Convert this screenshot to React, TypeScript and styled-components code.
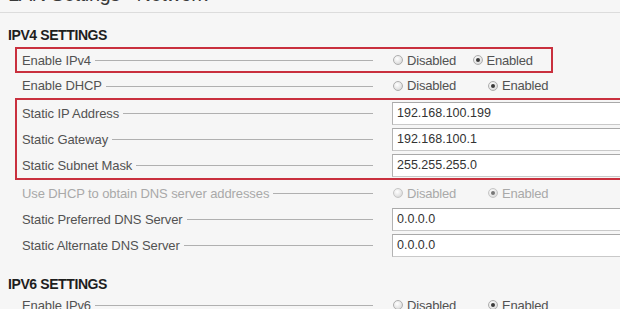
import React from 'react';
import styled, { createGlobalStyle } from 'styled-components';

const GlobalStyle = createGlobalStyle`
  html, body {
    margin: 0;
    padding: 0;
    background: #f6f6f6;
  }
  body {
    font-family: "Liberation Sans", Arial, sans-serif;
  }
`;

const Page = styled.div`
  width: 620px;
  height: 309px;
  overflow: hidden;
  background: #f6f6f6;
`;

const TitleBar = styled.div`
  height: 12px;
  border-bottom: 1px solid #dcdcdc;
  overflow: hidden;
`;

const Title = styled.h1`
  margin: -16px 0 0 8px;
  font-size: 20px;
  line-height: 20px;
  font-weight: normal;
  color: #3a3a3a;
  letter-spacing: -0.4px;
`;

const SectionTitle = styled.h2<{ $top: number }>`
  margin: ${({ $top }) => $top}px 0 0 8px;
  font-size: 14px;
  line-height: 16px;
  font-weight: bold;
  color: #1e1e1e;
  letter-spacing: -0.4px;
`;

const Highlight = styled.div<{ $top: number; $width?: number }>`
  margin: ${({ $top }) => $top}px 0 0 15px;
  width: ${({ $width }) => ($width ? `${$width - 4}px` : '640px')};
  border: 2px solid #c9303e;
`;

const Row = styled.div<{ $h?: number; $inset?: boolean }>`
  display: flex;
  align-items: center;
  height: ${({ $h }) => $h ?? 26}px;
  padding-left: ${({ $inset }) => ($inset ? 5 : 22)}px;
`;

const LabelCell = styled.div<{ $muted?: boolean }>`
  width: 351px;
  flex: none;
  display: flex;
  align-items: center;
  gap: 4px;
  font-size: 13px;
  color: ${({ $muted }) => ($muted ? '#a9a9a9' : '#525252')};
  letter-spacing: -0.1px;
  white-space: nowrap;
`;

const Leader = styled.span`
  flex: 1;
  height: 1px;
  margin-top: 1px;
  background: #b0b0b0;
`;

const Control = styled.div`
  margin-left: 19px;
  flex: 1;
  display: flex;
  align-items: center;
  min-width: 0;
`;

const RadioOption = styled.label<{ $muted?: boolean }>`
  width: 95px;
  display: inline-flex;
  align-items: center;
  gap: 4px;
  font-size: 13px;
  letter-spacing: -0.2px;
  color: ${({ $muted }) => ($muted ? '#a9a9a9' : '#525252')};
`;

const RadioDot = styled.span<{ $checked?: boolean; $muted?: boolean }>`
  width: 10px;
  height: 10px;
  box-sizing: border-box;
  border-radius: 50%;
  border: 1px solid ${({ $muted }) => ($muted ? '#c6c6c6' : '#aeaeae')};
  background: radial-gradient(circle at 40% 35%, #ffffff 0%, #e6e6e6 55%, #cbcbcb 100%);
  display: inline-flex;
  align-items: center;
  justify-content: center;
  margin-left: 1px;

  &::after {
    content: '';
    display: ${({ $checked }) => ($checked ? 'block' : 'none')};
    width: 4px;
    height: 4px;
    border-radius: 50%;
    background: ${({ $muted }) => ($muted ? '#777' : '#3a3a3a')};
  }
`;

const TextBox = styled.div`
  flex: 1;
  height: 23px;
  box-sizing: border-box;
  margin-right: -40px;
  padding-left: 4px;
  display: flex;
  align-items: center;
  background: #fff;
  border: 1px solid #c9c9c9;
  border-top-color: #a9a9a9;
  border-left-color: #b3b3b3;
  font-size: 12.5px;
  color: #333;
`;

type Field =
  | { label: string; kind: 'radio'; enabled: boolean; muted?: boolean }
  | { label: string; kind: 'text'; value: string };

const FieldRow = ({ field, inset, h }: { field: Field; inset?: boolean; h?: number }) => {
  const muted = field.kind === 'radio' && field.muted;
  return (
    <Row $inset={inset} $h={h}>
      <LabelCell $muted={muted}>
        <span>{field.label}</span>
        <Leader />
      </LabelCell>
      <Control>
        {field.kind === 'radio' ? (
          <>
            <RadioOption $muted={muted}>
              <RadioDot $muted={muted} $checked={!field.enabled} />
              Disabled
            </RadioOption>
            <RadioOption $muted={muted}>
              <RadioDot $muted={muted} $checked={field.enabled} />
              Enabled
            </RadioOption>
          </>
        ) : (
          <TextBox>{field.value}</TextBox>
        )}
      </Control>
    </Row>
  );
};

const staticFields: Field[] = [
  { label: 'Static IP Address', kind: 'text', value: '192.168.100.199' },
  { label: 'Static Gateway', kind: 'text', value: '192.168.100.1' },
  { label: 'Static Subnet Mask', kind: 'text', value: '255.255.255.0' },
];

const dnsFields: Field[] = [
  { label: 'Use DHCP to obtain DNS server addresses', kind: 'radio', enabled: true, muted: true },
  { label: 'Static Preferred DNS Server', kind: 'text', value: '0.0.0.0' },
  { label: 'Static Alternate DNS Server', kind: 'text', value: '0.0.0.0' },
];

const App = () => {
  return (
    <Page>
      <GlobalStyle />
      <TitleBar>
        <Title>LAN Settings - Network</Title>
      </TitleBar>

      <SectionTitle $top={14}>IPV4 SETTINGS</SectionTitle>
      <Highlight $top={4} $width={538}>
        <FieldRow inset h={22} field={{ label: 'Enable IPv4', kind: 'radio', enabled: true }} />
      </Highlight>
      <FieldRow h={25} field={{ label: 'Enable DHCP', kind: 'radio', enabled: true }} />
      <Highlight $top={0}>
        {staticFields.map((f) => (
          <FieldRow key={f.label} inset field={f} />
        ))}
      </Highlight>
      {dnsFields.map((f) => (
        <FieldRow key={f.label} field={f} />
      ))}

      <SectionTitle $top={18}>IPV6 SETTINGS</SectionTitle>
      <FieldRow field={{ label: 'Enable IPv6', kind: 'radio', enabled: true }} />
    </Page>
  );
};

export default App;
